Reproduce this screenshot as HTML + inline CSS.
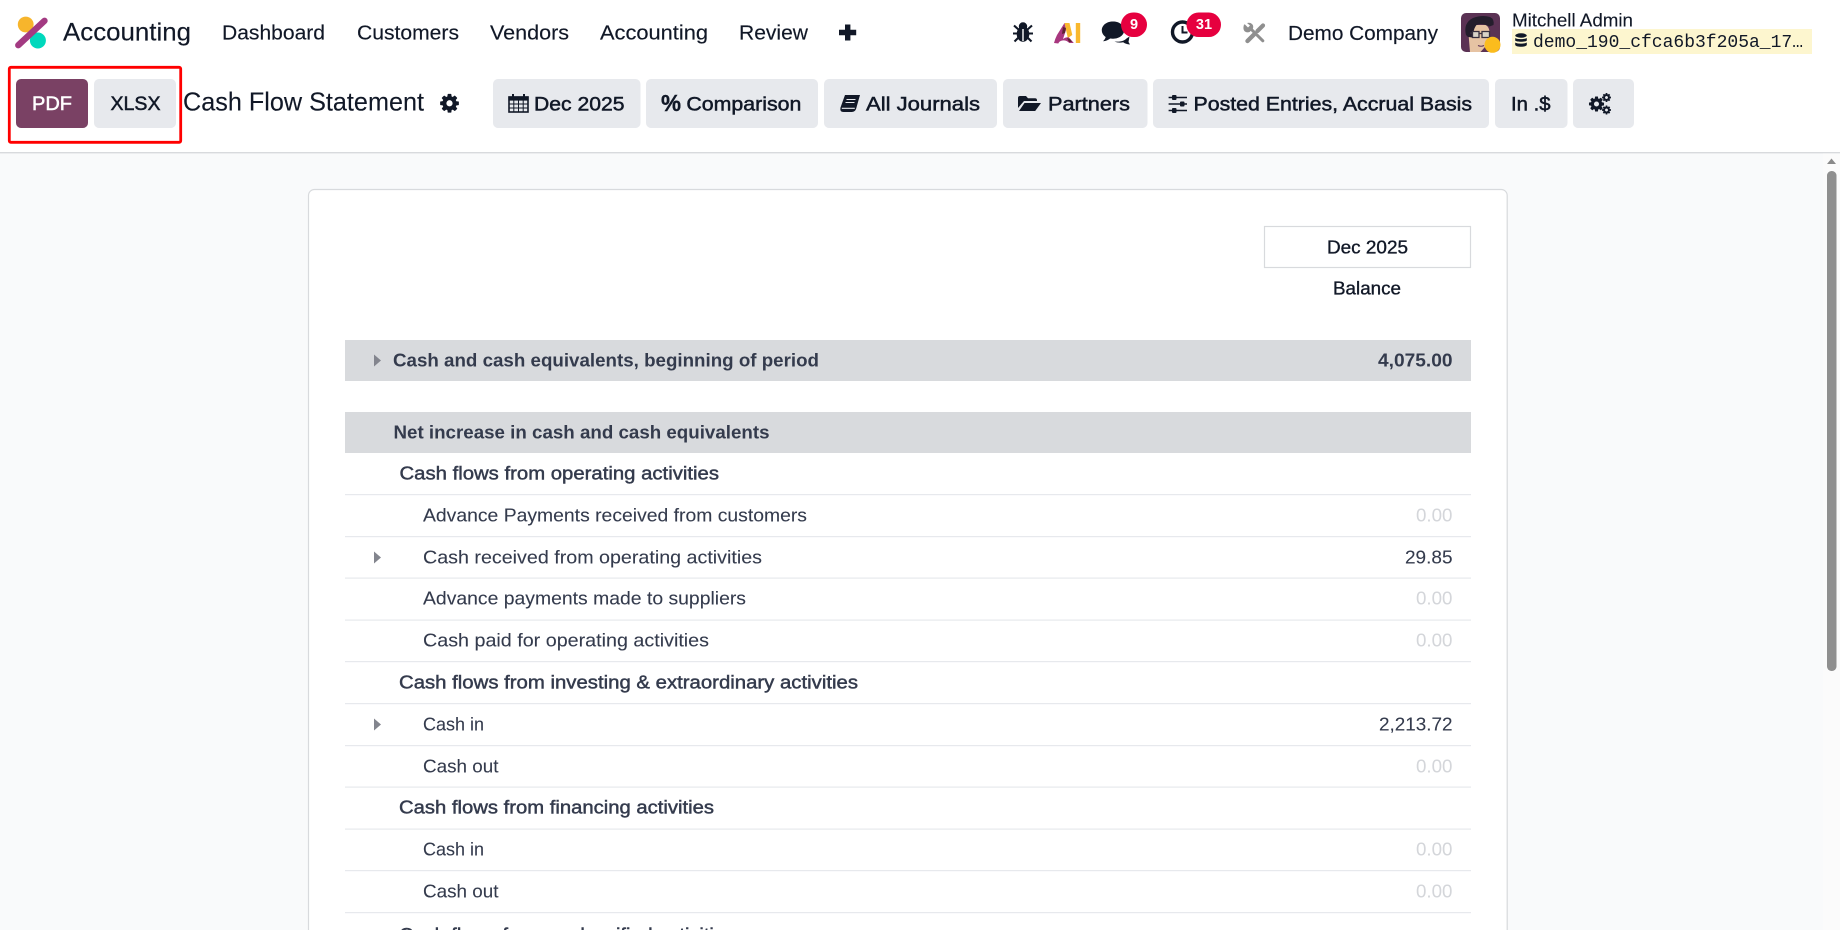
<!DOCTYPE html>
<html lang="en">
<head>
<meta charset="utf-8">
<title>Cash Flow Statement</title>
<style>
html,body{margin:0;padding:0;width:1840px;height:930px;overflow:hidden;background:#f9fafb}
svg{display:block}
text{font-family:"Liberation Sans",sans-serif;fill:currentColor;color:#111827}
.nav{font-size:20px;stroke:currentColor;stroke-width:.15}
.btn{font-size:19.8px;stroke:currentColor;stroke-width:.5}
.t{font-size:18px;color:#343b4d;stroke:currentColor;stroke-width:.08}
.h{font-size:18px;color:#343b4d;stroke:currentColor;stroke-width:.45}
.b{font-size:18px;font-weight:bold;color:#343b4d}
.z{font-size:18px;color:#d4d6da}
.c{font-size:18px;color:#111827;stroke:currentColor;stroke-width:.35}
.bd{font-size:14.5px;font-weight:bold;color:#fff}
.i{fill:#111827}
</style>
</head>
<body>
<svg width="1840" height="930" viewBox="0 0 1840 930" xmlns="http://www.w3.org/2000/svg">
<rect width="1840" height="930" fill="#f9fafb"/>
<rect width="1840" height="152" fill="#fff"/>
<rect y="152" width="1840" height="1.4" fill="#d8dadd"/>

<!-- logo -->
<circle cx="25.700" cy="24.500" r="7.900" fill="#f7b52c"/>
<circle cx="37.900" cy="40.500" r="8" fill="#00d8bc"/>
<line x1="18.300" y1="45.200" x2="44.500" y2="20.800" stroke="#a33a82" stroke-width="6.400" stroke-linecap="round"/>

<text class="nav" x="63" y="40.500" style="font-size:25px" textLength="128" lengthAdjust="spacingAndGlyphs">Accounting</text>
<text class="nav" x="222" y="39.500" textLength="103" lengthAdjust="spacingAndGlyphs">Dashboard</text>
<text class="nav" x="357" y="39.500" textLength="102" lengthAdjust="spacingAndGlyphs">Customers</text>
<text class="nav" x="490" y="39.500" textLength="79" lengthAdjust="spacingAndGlyphs">Vendors</text>
<text class="nav" x="600" y="39.500" textLength="108" lengthAdjust="spacingAndGlyphs">Accounting</text>
<text class="nav" x="739" y="39.500" textLength="69" lengthAdjust="spacingAndGlyphs">Review</text>
<path d="M845 24.500h5.400v5.300h5.800v5.400h-5.800v5.300h-5.400v-5.300h-6v-5.400h6z" class="i"/>

<!-- bug -->
<g class="i">
<circle cx="1023" cy="26.500" r="4.200"/>
<ellipse cx="1023" cy="34" rx="6.300" ry="7.800"/>
</g>
<g stroke="#111827" stroke-width="2.100" fill="none">
<path d="M1014 25.500l4.500 4M1032 25.500l-4.500 4M1013 33.500h5M1033 33.500h-5M1014.500 41.500l4-4M1031.500 41.500l-4-4"/>
</g>
<rect x="1022.300" y="29" width="1.400" height="12" fill="#fff"/>

<!-- AI -->
<path d="M1064.500 23h5l2.800 12-4.500 3z" fill="#f9b82e"/>
<path d="M1054 43q1-4 3-8l7.500-12 1.500 7-3 9q3-2.500 6-1.500l4.800 5.500h-4.500q-3-3-7-2.500-3 .5-4 3z" fill="#a8377f"/>
<path d="M1063 27l3 1-1 5-3 1zM1067 38l3 1 2 3h-3z" fill="#5c2433"/>
<rect x="1075.800" y="23" width="4.400" height="20" fill="#f9b82e"/>

<!-- chat -->
<path d="M1113 21.500c-6.500 0-11.200 3.900-11.200 8.800 0 2.800 1.500 5.100 3.900 6.700-.4 1.600-1.300 3-2.700 4.300 2.900-.3 5.300-1.300 7.200-2.800.9.100 1.800.2 2.800.2 6.500 0 11.200-3.900 11.200-8.600s-4.700-8.600-11.200-8.600z" class="i"/>
<path d="M1114.500 41.500c6.500.7 10-1 12-3l3-2-1 5.500 1.500 2.500c-3 0-5.200-1-6.800-2.200-3.200.6-6.200.3-8.700-.8z" class="i"/>
<rect x="1121" y="12.500" width="26" height="24.500" rx="12.200" fill="#e6003f"/>
<text class="bd" x="1134" y="29" text-anchor="middle">9</text>

<!-- clock -->
<circle cx="1182.500" cy="32" r="10" fill="none" stroke="#111827" stroke-width="3.400"/>
<path d="M1182.500 26v6.500h5" fill="none" stroke="#111827" stroke-width="2"/>
<rect x="1186.500" y="12.500" width="34.500" height="24.500" rx="12.200" fill="#e6003f"/>
<text class="bd" x="1204" y="29" text-anchor="middle">31</text>

<!-- tools -->
<g fill="none" stroke="#8f8f8f" stroke-linecap="round">
<path d="M1247.500 41l7-7" stroke-width="4.400"/>
<path d="M1257.500 31l5.500-5.500" stroke-width="4.200"/>
<path d="M1262.800 40.800l-12-12" stroke-width="3"/>
</g>
<path d="M1245 24.500l3 3 2-2-3-2.500q3-.8 5 1t.8 4.800l-3.200 3.200q-3 1-5-.8t-.6-6.700z" fill="#8f8f8f"/>

<text class="nav" x="1288" y="40" textLength="150" lengthAdjust="spacingAndGlyphs">Demo Company</text>

<!-- avatar -->
<clipPath id="av"><rect x="1461" y="13" width="39" height="39" rx="5"/></clipPath>
<g clip-path="url(#av)">
<rect x="1461" y="13" width="39" height="39" fill="#5b3254"/>
<path d="M1470 52l-1.500-18q-.5-7 4-9l13 0q4.500 2 4 10l-1 8-8 9z" fill="#e6c3a3"/>
<path d="M1466 35q-3-12 7-17 9-3.500 17-1 4.500 2 3.500 8l-4 1.500q-7-3.500-13-1.500-2.500 3-3 7.500l-1 5-4.500-.5z" fill="#241d2c"/>
<path d="M1472.500 31.500h6.500v6h-6.500zM1482 31.500h7.500v6h-7.500zM1479 33.500h3M1470 33h2.500" fill="#d9d3c8" stroke="#38303f" stroke-width="1.300"/>
<path d="M1478 45.500q3 1.500 6 0" fill="none" stroke="#5f3558" stroke-width="1"/>
</g>
<circle cx="1492.500" cy="44.800" r="8" fill="#fbbc1d"/>

<text x="1512" y="26.500" style="font-size:18px;stroke:currentColor;stroke-width:.1" textLength="121" lengthAdjust="spacingAndGlyphs">Mitchell Admin</text>
<rect x="1512" y="29" width="300" height="25" fill="#fdf6cf"/>
<g class="i">
<ellipse cx="1521" cy="35.500" rx="5.800" ry="2.200"/>
<path d="M1515.200 38c1.500 1.500 10 1.500 11.600 0v2.600c-1.500 1.500-10 1.500-11.600 0z"/>
<path d="M1515.200 42.500c1.500 1.500 10 1.500 11.600 0v2.500c-1 2.400-10.500 2.400-11.600 0z"/>
</g>
<text x="1533" y="47" style="font-family:'Liberation Mono',monospace;font-size:18px" textLength="270" lengthAdjust="spacingAndGlyphs">demo_190_cfca6b3f205a_17…</text>

<!-- toolbar -->
<rect x="16" y="79" width="72" height="49" rx="5" fill="#7a4164"/>
<text class="btn" x="32" y="110" style="color:#fff" textLength="40" lengthAdjust="spacingAndGlyphs">PDF</text>
<rect x="94" y="79" width="82" height="49" rx="5" fill="#e7e9ed"/>
<text class="btn" x="110.500" y="110" textLength="50" lengthAdjust="spacingAndGlyphs">XLSX</text>
<rect x="9.300" y="67.300" width="171.400" height="75" rx="1.500" fill="none" stroke="#f00" stroke-width="2.800"/>

<text x="183" y="110.500" style="font-size:26px;stroke:currentColor;stroke-width:.1" textLength="241" lengthAdjust="spacingAndGlyphs">Cash Flow Statement</text>
<path class="i" transform="translate(449.500 103.300) scale(.0122) translate(-896 -896)" d="M1152 896q0-106-75-181t-181-75-181 75-75 181 75 181 181 75 181-75 75-181zm512-109v222q0 12-8 23t-20 13l-185 28q-19 54-39 91 35 50 107 138 10 12 10 25t-9 23q-27 37-99 108t-94 71q-12 0-26-9l-138-108q-44 23-91 38-16 136-29 186-7 28-36 28h-222q-14 0-24.500-8.500t-11.500-21.500l-28-184q-49-16-90-37l-141 107q-10 9-25 9-14 0-25-11-126-114-165-168-7-10-7-23 0-12 8-23 15-21 51-66.500t54-70.500q-27-50-41-99l-183-27q-13-2-21-12.500t-8-23.500v-222q0-12 8-23t19-13l186-28q14-46 39-92-40-57-107-138-10-12-10-24 0-10 9-23 26-36 98.500-107.500t94.500-71.500q13 0 26 10l138 107q44-23 91-38 16-136 29-186 7-28 36-28h222q14 0 24.500 8.500t11.500 21.500l28 184q49 16 90 37l142-107q9-9 24-9 13 0 25 10 129 119 165 170 7 8 7 22 0 12-8 23-15 21-51 66.500t-54 70.500q26 50 41 98l183 28q13 2 21 12.500t8 23.500z"/>

<g fill="#e7e9ed">
<rect x="493" y="79" width="147.500" height="49" rx="5"/>
<rect x="646" y="79" width="172" height="49" rx="5"/>
<rect x="824" y="79" width="173" height="49" rx="5"/>
<rect x="1003" y="79" width="144.500" height="49" rx="5"/>
<rect x="1153" y="79" width="336" height="49" rx="5"/>
<rect x="1495" y="79" width="72.500" height="49" rx="5"/>
<rect x="1573" y="79" width="61" height="49" rx="5"/>
</g>

<!-- calendar -->
<g fill="none" stroke="#111827">
<rect x="509" y="97" width="19" height="15" stroke-width="1.600"/>
<rect x="509" y="97" width="19" height="3" fill="#111827" stroke-width="1.200"/>
<path d="M513 94v5M524 94v5" stroke-width="2"/>
<path d="M513.800 100v12M518.500 100v12M523.200 100v12M509 104h19M509 108h19" stroke-width="1"/>
</g>
<text class="btn" x="534" y="110.500" textLength="90.500" lengthAdjust="spacingAndGlyphs">Dec 2025</text>

<!-- percent -->
<text x="661" y="111" style="font-size:23px;font-weight:bold;stroke:currentColor;stroke-width:.4" textLength="20" lengthAdjust="spacingAndGlyphs">%</text>
<text class="btn" x="686.400" y="110.500" textLength="115" lengthAdjust="spacingAndGlyphs">Comparison</text>

<!-- book -->
<path class="i" d="M845 95h15l-3.800 13.500q-1 3.500-4.500 3.500h-8.200q-4 0-3-4.500z"/>
<path d="M841.800 108.300h13M846.500 99.500h9M845.500 102.500h9" stroke="#e7e9ed" stroke-width="1.100"/>
<text class="btn" x="866" y="110.500" textLength="114" lengthAdjust="spacingAndGlyphs">All Journals</text>

<!-- folder -->
<path class="i" d="M1018 98q0-2 2-2h6l2 2.200h7q2 0 2 2v.800h-13l-6 7z"/>
<path class="i" d="M1024.500 103h16.500l-5.800 8h-16.200z"/>
<text class="btn" x="1048" y="110.500" textLength="82" lengthAdjust="spacingAndGlyphs">Partners</text>

<!-- sliders -->
<path d="M1168.600 97.500h18.400M1168.600 104h18.400M1168.600 110.500h18.400" stroke="#111827" stroke-width="1.500"/>
<g class="i"><rect x="1172" y="95" width="4.500" height="5" rx="1"/><rect x="1180" y="101.500" width="4.500" height="5" rx="1"/><rect x="1172" y="108" width="4.500" height="5" rx="1"/></g>
<text class="btn" x="1193.500" y="110.500" textLength="278.500" lengthAdjust="spacingAndGlyphs">Posted Entries, Accrual Basis</text>

<text class="btn" x="1511" y="110.500" textLength="39.500" lengthAdjust="spacingAndGlyphs">In .$</text>

<!-- gears -->
<path class="i" transform="translate(1596.500 104) scale(.0098) translate(-896 -896)" d="M1152 896q0-106-75-181t-181-75-181 75-75 181 75 181 181 75 181-75 75-181zm512-109v222q0 12-8 23t-20 13l-185 28q-19 54-39 91 35 50 107 138 10 12 10 25t-9 23q-27 37-99 108t-94 71q-12 0-26-9l-138-108q-44 23-91 38-16 136-29 186-7 28-36 28h-222q-14 0-24.500-8.500t-11.500-21.500l-28-184q-49-16-90-37l-141 107q-10 9-25 9-14 0-25-11-126-114-165-168-7-10-7-23 0-12 8-23 15-21 51-66.500t54-70.500q-27-50-41-99l-183-27q-13-2-21-12.500t-8-23.500v-222q0-12 8-23t19-13l186-28q14-46 39-92-40-57-107-138-10-12-10-24 0-10 9-23 26-36 98.500-107.500t94.500-71.500q13 0 26 10l138 107q44-23 91-38 16-136 29-186 7-28 36-28h222q14 0 24.500 8.500t11.500 21.500l28 184q49 16 90 37l142-107q9-9 24-9 13 0 25 10 129 119 165 170 7 8 7 22 0 12-8 23-15 21-51 66.500t-54 70.500q26 50 41 98l183 28q13 2 21 12.500t8 23.500z"/>
<path class="i" transform="translate(1606.500 97.500) scale(.0058) translate(-896 -896)" d="M1152 896q0-106-75-181t-181-75-181 75-75 181 75 181 181 75 181-75 75-181zm512-109v222q0 12-8 23t-20 13l-185 28q-19 54-39 91 35 50 107 138 10 12 10 25t-9 23q-27 37-99 108t-94 71q-12 0-26-9l-138-108q-44 23-91 38-16 136-29 186-7 28-36 28h-222q-14 0-24.500-8.500t-11.500-21.500l-28-184q-49-16-90-37l-141 107q-10 9-25 9-14 0-25-11-126-114-165-168-7-10-7-23 0-12 8-23 15-21 51-66.500t54-70.500q-27-50-41-99l-183-27q-13-2-21-12.500t-8-23.500v-222q0-12 8-23t19-13l186-28q14-46 39-92-40-57-107-138-10-12-10-24 0-10 9-23 26-36 98.500-107.500t94.500-71.500q13 0 26 10l138 107q44-23 91-38 16-136 29-186 7-28 36-28h222q14 0 24.500 8.500t11.500 21.500l28 184q49 16 90 37l142-107q9-9 24-9 13 0 25 10 129 119 165 170 7 8 7 22 0 12-8 23-15 21-51 66.500t-54 70.500q26 50 41 98l183 28q13 2 21 12.500t8 23.500z"/>
<path class="i" transform="translate(1606.500 110) scale(.0058) translate(-896 -896)" d="M1152 896q0-106-75-181t-181-75-181 75-75 181 75 181 181 75 181-75 75-181zm512-109v222q0 12-8 23t-20 13l-185 28q-19 54-39 91 35 50 107 138 10 12 10 25t-9 23q-27 37-99 108t-94 71q-12 0-26-9l-138-108q-44 23-91 38-16 136-29 186-7 28-36 28h-222q-14 0-24.500-8.500t-11.500-21.500l-28-184q-49-16-90-37l-141 107q-10 9-25 9-14 0-25-11-126-114-165-168-7-10-7-23 0-12 8-23 15-21 51-66.500t54-70.500q-27-50-41-99l-183-27q-13-2-21-12.500t-8-23.500v-222q0-12 8-23t19-13l186-28q14-46 39-92-40-57-107-138-10-12-10-24 0-10 9-23 26-36 98.500-107.500t94.500-71.500q13 0 26 10l138 107q44-23 91-38 16-136 29-186 7-28 36-28h222q14 0 24.500 8.500t11.500 21.500l28 184q49 16 90 37l142-107q9-9 24-9 13 0 25 10 129 119 165 170 7 8 7 22 0 12-8 23-15 21-51 66.500t-54 70.500q26 50 41 98l183 28q13 2 21 12.500t8 23.500z"/>

<!-- card -->
<path d="M308.500 930V195.500a6 6 0 0 1 6-6H1501.200a6 6 0 0 1 6 6V930" fill="#fff" stroke="#d8dadd" stroke-width="1.200"/>
<rect x="1264.500" y="226.500" width="206" height="41" fill="#fff" stroke="#d8dadd" stroke-width="1.200"/>
<text class="c" x="1327" y="253.500" textLength="81" lengthAdjust="spacingAndGlyphs">Dec 2025</text>
<text class="c" x="1333" y="294.500" textLength="68" lengthAdjust="spacingAndGlyphs">Balance</text>

<rect x="345" y="340" width="1126" height="41" fill="#d8dadd"/>
<rect x="345" y="412" width="1126" height="41" fill="#d8dadd"/>

<g fill="#e7e9ed">
<rect x="345" y="494" width="1126" height="1.200"/>
<rect x="345" y="536" width="1126" height="1.200"/>
<rect x="345" y="577.500" width="1126" height="1.200"/>
<rect x="345" y="619.500" width="1126" height="1.200"/>
<rect x="345" y="661" width="1126" height="1.200"/>
<rect x="345" y="703" width="1126" height="1.200"/>
<rect x="345" y="745" width="1126" height="1.200"/>
<rect x="345" y="786.500" width="1126" height="1.200"/>
<rect x="345" y="828.500" width="1126" height="1.200"/>
<rect x="345" y="870" width="1126" height="1.200"/>
<rect x="345" y="912" width="1126" height="1.200"/>
</g>

<g fill="#83858e">
<polygon points="374,354.500 381,360.500 374,366.500"/>
<polygon points="374,551.500 381,557.500 374,563.500"/>
<polygon points="374,718.500 381,724.500 374,730.500"/>
</g>

<text class="b" x="393" y="366.500" textLength="426" lengthAdjust="spacingAndGlyphs">Cash and cash equivalents, beginning of period</text>
<text class="b" x="1378" y="366.500" textLength="74.500" lengthAdjust="spacingAndGlyphs">4,075.00</text>
<text class="b" x="393.500" y="438.500" textLength="376" lengthAdjust="spacingAndGlyphs">Net increase in cash and cash equivalents</text>

<text class="h" x="399.500" y="479.500" textLength="319.500" lengthAdjust="spacingAndGlyphs">Cash flows from operating activities</text>
<text class="t" x="423" y="521.500" textLength="384" lengthAdjust="spacingAndGlyphs">Advance Payments received from customers</text>
<text class="z" x="1416" y="521.500" textLength="36.500" lengthAdjust="spacingAndGlyphs">0.00</text>
<text class="t" x="423" y="563.500" textLength="339" lengthAdjust="spacingAndGlyphs">Cash received from operating activities</text>
<text class="t" x="1405" y="563.500" textLength="47.500" lengthAdjust="spacingAndGlyphs">29.85</text>
<text class="t" x="423" y="604.500" textLength="323" lengthAdjust="spacingAndGlyphs">Advance payments made to suppliers</text>
<text class="z" x="1416" y="604.500" textLength="36.500" lengthAdjust="spacingAndGlyphs">0.00</text>
<text class="t" x="423" y="646.500" textLength="286" lengthAdjust="spacingAndGlyphs">Cash paid for operating activities</text>
<text class="z" x="1416" y="646.500" textLength="36.500" lengthAdjust="spacingAndGlyphs">0.00</text>
<text class="h" x="399" y="688.500" textLength="459" lengthAdjust="spacingAndGlyphs">Cash flows from investing &amp; extraordinary activities</text>
<text class="t" x="423" y="730.500" textLength="61" lengthAdjust="spacingAndGlyphs">Cash in</text>
<text class="t" x="1379" y="730.500" textLength="73.500" lengthAdjust="spacingAndGlyphs">2,213.72</text>
<text class="t" x="423" y="772.500" textLength="75.500" lengthAdjust="spacingAndGlyphs">Cash out</text>
<text class="z" x="1416" y="772.500" textLength="36.500" lengthAdjust="spacingAndGlyphs">0.00</text>
<text class="h" x="399" y="813.500" textLength="315" lengthAdjust="spacingAndGlyphs">Cash flows from financing activities</text>
<text class="t" x="423" y="855.500" textLength="61" lengthAdjust="spacingAndGlyphs">Cash in</text>
<text class="z" x="1416" y="855.500" textLength="36.500" lengthAdjust="spacingAndGlyphs">0.00</text>
<text class="t" x="423" y="897.500" textLength="75.500" lengthAdjust="spacingAndGlyphs">Cash out</text>
<text class="z" x="1416" y="897.500" textLength="36.500" lengthAdjust="spacingAndGlyphs">0.00</text>
<text class="h" x="399" y="941" textLength="336" lengthAdjust="spacingAndGlyphs">Cash flows from unclassified activities</text>

<!-- scrollbar -->
<rect x="1823" y="153.400" width="17" height="776.600" fill="#fbfbfb"/>
<polygon points="1831.500,158.500 1836,164 1827,164" fill="#8a8a8a"/>
<rect x="1827" y="171" width="9.500" height="500" rx="4.500" fill="#8f8f8f"/>
</svg>
</body>
</html>
